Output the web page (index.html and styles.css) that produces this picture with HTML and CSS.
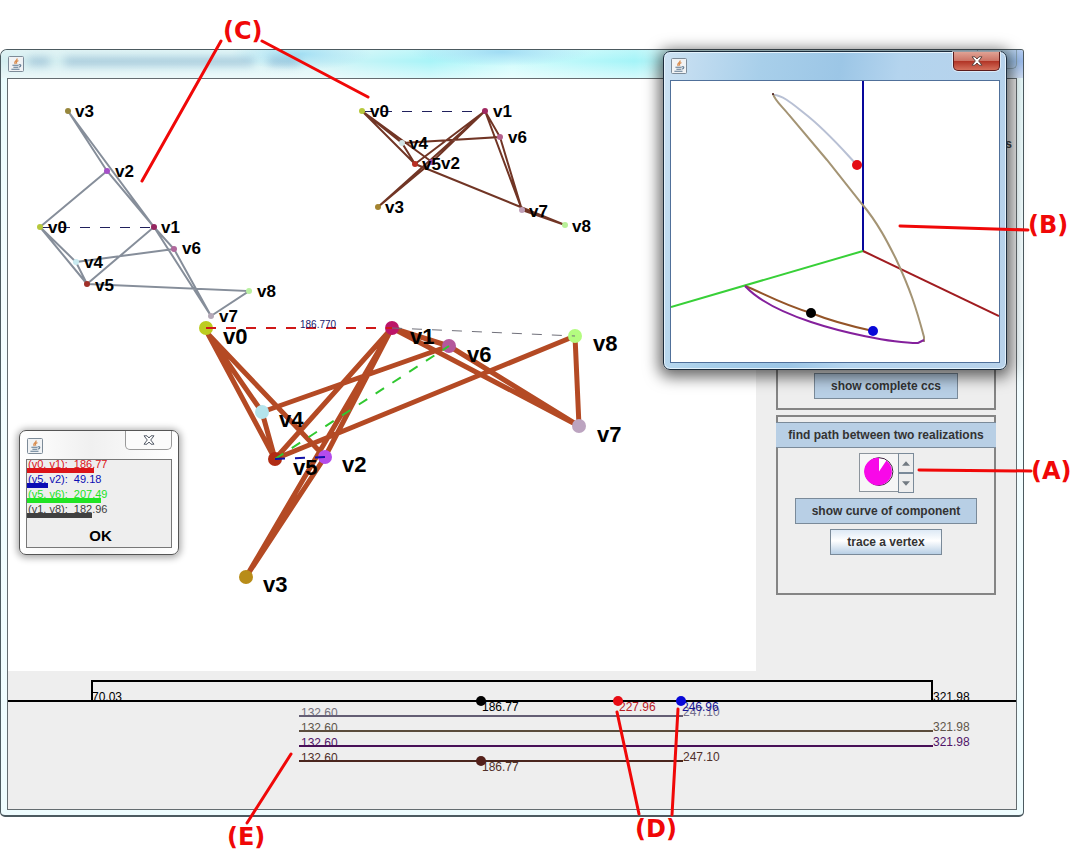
FILE: index.html
```
<!DOCTYPE html>
<html lang="en">
<head>
<meta charset="utf-8">
<title>Realizations</title>
<link rel="stylesheet" href="styles.css">
</head>
<body>
<svg class="defs" aria-hidden="true">
  <symbol id="java" viewBox="0 0 16 16">
    <rect x=".5" y=".5" width="15" height="15" rx="1" fill="#f1f3f5" stroke="#7d8b98"/>
    <path d="M9.200 2.500C9.600 4.600 5 5.200 7.400 8M10.400 4.600C8 5.200 8 6.400 9 7.600" fill="none" stroke="#d88a4c" stroke-width="1.200"/>
    <path d="M4.400 9.200H10.600M5.400 11.200H10M3.400 13.300H11.500M10.800 8.800C13.600 8.200 13.400 10.800 10.600 11.200" fill="none" stroke="#5e7890" stroke-width="1.100"/>
  </symbol>
  <symbol id="cross" viewBox="0 0 12 10">
    <path d="M1 .8h3l2 2.200L8 .8h3L7.700 5 11 9.200H8L6 7 4 9.200H1L4.300 5z"/>
  </symbol>
</svg>
<main class="scene">
  <section class="window">
    <header class="titlebar">
      <svg class="java"><use href="#java"/></svg>
      <span class="ghost ghost-a"></span><span class="ghost ghost-b"></span><span class="ghost ghost-c"></span>
      <span class="caption-edge"></span>
    </header>
    <div class="client">
      <div class="work">
        <svg class="canvas" viewBox="8 79 748 592" role="img" aria-label="Linkage realizations">
          <g class="mini slate">
            <path d="M107 171L40 227L76 262L87 284L40 227M76 262L174 249M87 284L154 227L107 171L68 111L154 227L174 249L211 316L154 227M87 284L249 291L211 316"/>
            <path class="dash navy" d="M40 227H154"/>
          </g>
          <g class="mini-dots">
            <circle cx="68" cy="111" r="3" fill="#97873c"/><circle cx="107" cy="171" r="3" fill="#a54fc8"/><circle cx="40" cy="227" r="3" fill="#b7c83c"/><circle cx="154" cy="227" r="3" fill="#942560"/><circle cx="174" cy="249" r="3" fill="#b0689c"/><circle cx="76" cy="262" r="3" fill="#c8eaf0"/><circle cx="87" cy="284" r="3" fill="#a03028"/><circle cx="249" cy="291" r="3" fill="#b8f0a0"/><circle cx="211" cy="316" r="3" fill="#b4a8b8"/>
          </g>
          <g class="mini-label">
            <text x="75" y="117">v3</text><text x="115" y="177">v2</text><text x="48" y="233">v0</text><text x="161" y="233">v1</text><text x="182" y="254">v6</text><text x="84" y="268">v4</text><text x="95" y="291">v5</text><text x="257" y="297">v8</text><text x="219" y="322">v7</text>
          </g>
          <g class="mini umber">
            <path d="M362 111L402 143L415 164L362 111L432 162L485 111L415 164M402 143L500 137L485 111L378 207L432 162M485 111L522 210L500 137M415 164L565 225L522 210"/>
            <path class="dash navy" d="M362 111H485"/>
          </g>
          <g class="mini-dots">
            <circle cx="362" cy="111" r="3" fill="#b7c83c"/><circle cx="485" cy="111" r="3" fill="#a02860"/><circle cx="402" cy="143" r="3" fill="#d0e4e6"/><circle cx="500" cy="137" r="3" fill="#b4608c"/><circle cx="415" cy="164" r="3" fill="#b83024"/><circle cx="432" cy="162" r="3" fill="#9448b0"/><circle cx="378" cy="207" r="3" fill="#a48430"/><circle cx="522" cy="210" r="3" fill="#c0a0b8"/><circle cx="565" cy="225" r="3" fill="#b8f098"/>
          </g>
          <g class="mini-label">
            <text x="370" y="117">v0</text><text x="493" y="117">v1</text><text x="409" y="149">v4</text><text x="508" y="143">v6</text><text x="422" y="170">v5</text><text x="441" y="169">v2</text><text x="385" y="213">v3</text><text x="529" y="217">v7</text><text x="572" y="232">v8</text>
          </g>
          <path class="big" d="M208 334L262 412L275 459L208 334L325 457L392 328L275 459M262 412L449 346L392 328L246 577L325 457M392 328L579 426L449 346M275 459L575 336L579 426"/>
          <g class="big-dots">
            <circle cx="206" cy="328" r="7" fill="#bccc20"/><circle cx="392" cy="328" r="7" fill="#bc1468"/><circle cx="449" cy="346" r="7" fill="#b4589c"/><circle cx="575" cy="336" r="7" fill="#b4fc80"/><circle cx="579" cy="426" r="7" fill="#bca4c0"/><circle cx="262" cy="412" r="7" fill="#b4e4ec"/><circle cx="275" cy="459" r="7" fill="#b02c14"/><circle cx="325" cy="457" r="7" fill="#b44cec"/><circle cx="246" cy="577" r="7" fill="#b88c18"/>
          </g>
          <g class="dash">
            <path d="M206 328H392" stroke="#d01818" stroke-width="2"/>
            <path d="M392 328L575 336" stroke="#70707a" stroke-width="1"/>
            <path d="M275 459L449 346" stroke="#30c830" stroke-width="2"/>
            <path d="M275 459L325 457" stroke="#1010a8" stroke-width="2"/>
          </g>
          <text class="length" x="300" y="328">186.770</text>
          <g class="big-label">
            <text x="223" y="344">v0</text><text x="410" y="344">v1</text><text x="467" y="362">v6</text><text x="593" y="351">v8</text><text x="597" y="442">v7</text><text x="279" y="427">v4</text><text x="293" y="475">v5</text><text x="342" y="472">v2</text><text x="263" y="592">v3</text>
          </g>
        </svg>
        <aside class="side">
          <p class="side-title">s</p>
          <div class="group group-end">
            <button type="button" class="btn on">show complete ccs</button>
          </div>
          <div class="group">
            <button type="button" class="btn on wide">find path between two realizations</button>
            <div class="spinner">
              <svg class="pie" viewBox="0 0 40 40" role="img" aria-label="Progress"><circle cx="20" cy="19" r="15" fill="#fff" stroke="#301030"/><path d="M20 19V4A15 15 0 1 0 28 7z" fill="#f808e8"/></svg>
              <div class="steps">
                <button type="button" class="step" aria-label="Up"><svg viewBox="0 0 7 4"><path d="M0 4h7L3.500 0z"/></svg></button>
                <button type="button" class="step" aria-label="Down"><svg viewBox="0 0 7 4"><path d="M0 0h7L3.500 4z"/></svg></button>
              </div>
            </div>
            <button type="button" class="btn on">show curve of component</button>
            <button type="button" class="btn">trace a vertex</button>
          </div>
        </aside>
      </div>
      <svg class="timeline" viewBox="8 671 1008 138" role="img" aria-label="Length intervals">
        <g class="value">
          <text x="92" y="701">70.03</text><text x="933" y="701">321.98</text>
          <text x="482" y="711">186.77</text>
          <text x="619" y="711" fill="#b82028">227.96</text>
          <text x="683" y="716" fill="#74708c">247.10</text>
          <text x="682" y="711" fill="#141494">246.96</text>
          <text x="301" y="717" fill="#74707c">132.60</text>
          <text x="301" y="732" fill="#60564a">132.60</text><text x="933" y="731" fill="#60564a">321.98</text>
          <text x="301" y="747" fill="#501468">132.60</text><text x="933" y="746" fill="#501468">321.98</text>
          <text x="301" y="762" fill="#50302a">132.60</text><text x="683" y="761" fill="#50302a">247.10</text>
          <text x="482" y="771" fill="#50302a">186.77</text>
        </g>
        <g class="span">
          <path d="M8 701H1016M92 701V681H932V701" stroke="#000"/>
          <path d="M299 716H683" stroke="#645e74"/>
          <path d="M299 731H933" stroke="#5a4c3c"/>
          <path d="M299 746H933" stroke="#481058"/>
          <path d="M299 761H683" stroke="#4a261e"/>
        </g>
        <circle cx="481" cy="701" r="5"/><circle cx="618" cy="701" r="5" fill="#e80c14"/><circle cx="681" cy="701" r="5" fill="#0808d8"/><circle cx="481" cy="761" r="5" fill="#54201a"/>
      </svg>
    </div>
  </section>

  <section class="dialog lengths">
    <header class="dialog-bar">
      <svg class="java"><use href="#java"/></svg>
      <button type="button" class="close pale" aria-label="Close"><svg><use href="#cross"/></svg></button>
    </header>
    <div class="dialog-body">
      <ul class="bars">
        <li class="red">(v0, v1):&nbsp; 186.77<span class="bar" style="width:67px"></span></li>
        <li class="blue">(v5, v2):&nbsp; 49.18<span class="bar" style="width:21px"></span></li>
        <li class="green">(v5, v6):&nbsp; 207.49<span class="bar" style="width:74px"></span></li>
        <li class="gray">(v1, v8):&nbsp; 182.96<span class="bar" style="width:65px"></span></li>
      </ul>
      <button type="button" class="ok">OK</button>
    </div>
  </section>

  <section class="dialog space">
    <header class="dialog-bar">
      <svg class="java"><use href="#java"/></svg>
      <button type="button" class="close hot" aria-label="Close"><svg><use href="#cross"/></svg></button>
    </header>
    <svg class="plot" viewBox="671 81 328 281" role="img" aria-label="Curves in three dimensions">
      <path d="M863 81V251" stroke="#08089c"/>
      <path d="M863 251L671 307" stroke="#38d038"/>
      <path d="M863 251L999 316" stroke="#a01c20"/>
      <path d="M774 95C783 95 795 106 804 113C826 130 842 149 857 165" stroke="#b8c0d4"/>
      <path d="M773 94C775 101 783 107 789 115L827 160L862 204C878 223 888 243 896 259C910 289 916 307 924 337V342" stroke="#a49474"/>
      <path d="M745 286C761 292 781 304 811 313C831 321 850 326 873 331" stroke="#945428"/>
      <path d="M745 286C758 300 778 311 811 322C841 332 890 343 918 343L924 340" stroke="#84209c"/>
      <circle cx="773" cy="94" r="1" fill="#401010"/>
      <circle cx="857" cy="165" r="5" fill="#e40c14"/><circle cx="811" cy="313" r="5"/><circle cx="873" cy="331" r="5" fill="#0808d8"/>
    </svg>
  </section>

  <svg class="notes" viewBox="0 0 1080 860">
    <path d="M221 41L142 181M262 41L368 97M900 226L1028 230M919 470L1031 471M617 712L639 814M678 709L672 815M291 754L247 823"/>
    <text x="223" y="39">(C)</text><text x="1028" y="233">(B)</text><text x="1031" y="479">(A)</text><text x="635" y="837">(D)</text><text x="227" y="845">(E)</text>
  </svg>
</main>
</body>
</html>
```
FILE: styles.css
```
* { box-sizing: border-box; }
body { margin: 0; background: #fff; font-family: "Liberation Sans", Arial, sans-serif; font-size: 12px; }
svg { display: block; }
button { font: inherit; padding: 0; }
.defs { position: absolute; width: 0; height: 0; }
.scene { position: relative; padding: 49px 56px 44px 0; }

.window {
  border: 1px solid #4c5a60; border-width: 1px 1px 2px; border-radius: 7px 3px 5px 5px;
  background: linear-gradient(180deg, #e8fbfc, #f4fdff 30%, #eefcfe);
  padding: 0 6px 5px;
}
.titlebar {
  position: relative; display: flex; align-items: center; height: 28px; margin: 0 -6px; padding-left: 7px;
  border-radius: 6px 2px 0 0;
  background:
    radial-gradient(ellipse 70px 16px at 300px 4px, #a4e0f4, transparent),
    radial-gradient(ellipse 90px 14px at 500px 2px, #a0dcf4, transparent),
    linear-gradient(180deg, #fff4 0, #fff0 40%, #fff8 100%),
    linear-gradient(90deg, #d4eef0, #d8f4f6 30%, #a8f4f8 42%, #d0fcfc 50%, #a4f4f8 62%, #c8f4f6 66%, #9cc4dc 98%, #9cbcf0);
}
.java { width: 16px; height: 16px; }
.ghost { height: 7px; border-radius: 4px; background: #4a7cae; opacity: .4; filter: blur(4px); margin-top: -5px; }
.ghost-a { width: 22px; margin-left: 4px; }
.ghost-b { width: 190px; margin-left: 14px; }
.ghost-c { width: 32px; margin-left: 14px; }
.caption-edge { position: absolute; top: 0; right: 6px; width: 40px; height: 19px; border: 1px solid #8aa4b4; border-top: 0; border-radius: 0 0 5px 5px; }
.client { border: 1px solid #646c70; background: #eee; }
.work { display: flex; align-items: stretch; }
.canvas { flex: 1; min-width: 0; height: auto; background: #fff; }
.timeline { width: 100%; height: auto; }

.mini path { fill: none; stroke-width: 2; }
.slate path { stroke: #868e9a; }
.umber path { stroke: #713525; }
.dash, .mini .dash { fill: none; stroke-dasharray: 10 10; }
.mini .navy { stroke: #20205c; stroke-width: 1; shape-rendering: crispEdges; }
.mini-label { font-size: 17px; font-weight: bold; }
.big { fill: none; stroke: #b44a24; stroke-width: 5; stroke-linejoin: round; }
.big-label { font-size: 22px; font-weight: bold; }
.length { font-size: 10px; fill: #18186c; }
.value { font-size: 12px; }
.span { fill: none; stroke-width: 2; }

.side { display: flex; flex-direction: column; flex: 0 0 260px; padding: 57px 0 0; }
.side-title { margin: 0 4px 6px; text-align: right; font-weight: bold; line-height: 16px; color: #444; }
.group {
  display: flex; flex-direction: column; align-items: center; gap: 5px;
  height: 180px; margin: 0 20px 5px; padding-top: 5px; border: 2px solid #848484;
}
.group-end { height: 252px; justify-content: flex-end; padding-bottom: 9px; }
.btn {
  height: 26px; padding: 0 16px; border: 1px solid #7a8a99; white-space: nowrap;
  font-weight: bold; color: #333; background: linear-gradient(#dde9f5, #fff 45%, #b8cfe5);
}
.btn.on { background: #b8cfe5; }
.btn.wide { align-self: stretch; margin: 0 -2px; padding: 0; border-width: 1px 0; }
.spinner { display: flex; height: 40px; }
.pie { width: 40px; height: 39px; border: 1px solid #8c949c; background: #f6f6f6; }
.steps { display: flex; flex-direction: column; width: 16px; margin-left: -1px; }
.step { display: grid; place-items: center; flex: 1; border: 1px solid #7a8a99; background: #eee; }
.step svg { width: 8px; height: 5px; fill: #727a82; }

.dialog { position: absolute; display: flex; flex-direction: column; border: 1px solid #555; border-radius: 7px; padding: 0 6px 6px; }
.dialog-bar { display: flex; align-items: center; justify-content: space-between; height: 28px; }
.dialog-bar .java { margin-left: 1px; }
.close { align-self: flex-start; display: grid; place-items: center; width: 47px; height: 19px; border: 1px solid #999; border-top: 0; border-radius: 0 0 5px 5px; }
.close svg { width: 12px; height: 10px; }
.pale { background: #fbfbfb; }
.pale svg { fill: #fff; stroke: #555c68; stroke-width: 1; }
.hot { border-color: #5c1c1c; background: linear-gradient(#e0a294, #cc7466 48%, #b03224 50%, #d4705c); box-shadow: 0 0 0 1px #fff8; }
.hot svg { fill: #fff; stroke: #60443f; stroke-width: 1; }
.lengths { left: 19px; top: 430px; width: 160px; background: linear-gradient(90deg, #fff, #f0f0f0 45%, #fff); box-shadow: 0 1px 7px 2px #0005; }
.lengths .java { margin-top: 2px; }
.dialog-body { display: flex; flex-direction: column; align-items: center; border: 1px solid #777; background: #eee; }
.bars { align-self: stretch; margin: 0; padding: 0; list-style: none; font-size: 11px; line-height: 8px; }
.bars li { display: flex; flex-direction: column; height: 15px; text-indent: 1px; }
.bar { height: 5px; background: currentColor; }
.red { color: #dc1418; }
.blue { color: #0c0cb4; }
.green { color: #20e424; }
.gray { color: #404040; }
.ok { height: 27px; padding: 3px 0 0 3px; border: 0; background: none; color: #000; font-size: 15px; font-weight: bold; }
.space {
  left: 663px; top: 51px; width: 344px; border-color: #1c2c3c;
  background: linear-gradient(100deg, #cde2f3, #a8cfea 25%, #9cc6e6 45%, #b4d4ee 60%, #b8d2ea);
  box-shadow: 0 3px 15px 4px #0009, inset 0 0 0 1px #e4f2fc;
}
.plot { width: 100%; height: auto; border: 1px solid #50709a; background: #fff; fill: none; stroke-width: 2; }
.plot circle { stroke: none; }
.plot circle:not([fill]) { fill: #000; }

.notes { position: absolute; left: 0; top: 0; width: 100%; height: auto; pointer-events: none; }
.notes path { fill: none; stroke: #f00808; stroke-width: 3; stroke-linecap: round; }
.notes text { font: bold 24px "DejaVu Sans", Verdana, sans-serif; fill: #f00808; }
```
